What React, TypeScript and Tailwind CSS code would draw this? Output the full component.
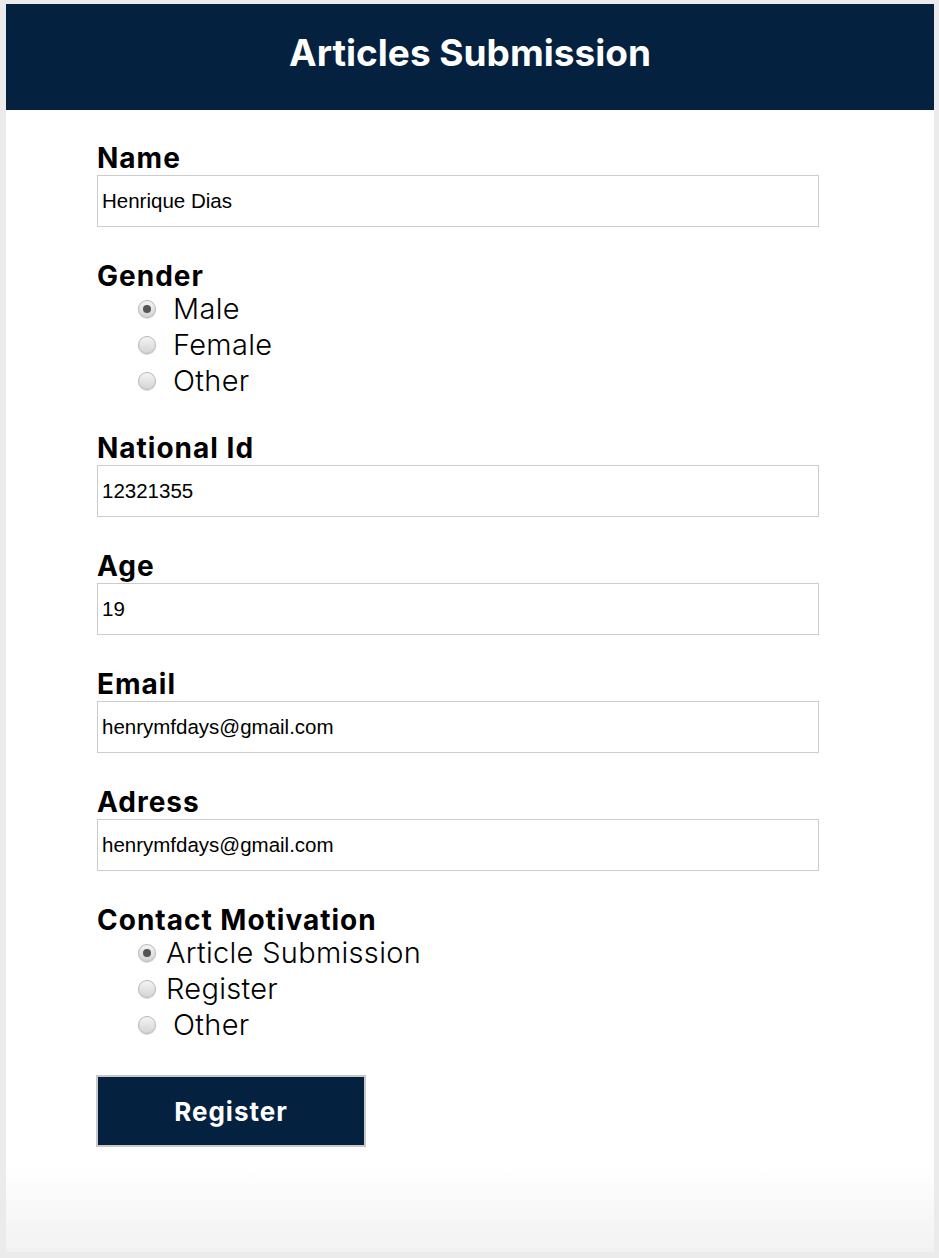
import { useState } from 'react'

const FONT = "font-['Inter','Noto_Sans',sans-serif]"

function Radio({ checked }: { checked: boolean }) {
  return (
    <span className="relative flex h-[18px] w-[18px] shrink-0 items-center justify-center rounded-full border border-[#b8b8b8] bg-[linear-gradient(to_bottom,#f4f4f4,#d4d4d4)] shadow-[0_1px_1px_rgba(0,0,0,0.15)]">
      {checked && <span className="h-[8px] w-[8px] rounded-full bg-[#555]" />}
    </span>
  )
}

function Field({ label, value }: { label: string; value: string }) {
  return (
    <div className="mb-[32px]">
      <div className="h-[34px] text-[28px] font-bold leading-[34px] tracking-[1px] text-black">{label}</div>
      <div className="flex h-[52px] w-[722px] items-center border border-[#cccccc] pl-[4px] font-['Liberation_Sans',Arial,sans-serif] text-[20.5px] text-black">
        {value}
      </div>
    </div>
  )
}

function RadioGroup({
  label,
  options,
  gap,
}: {
  label: string
  options: { text: string; extra?: boolean }[]
  gap: string
}) {
  const [sel] = useState(0)
  return (
    <div className="mb-[32px]">
      <div className="h-[34px] text-[28px] font-bold leading-[34px] tracking-[1px] text-black">{label}</div>
      <div className="-mt-[2px] pl-[41px]">
        {options.map((o, i) => (
          <div key={o.text} className={`flex h-[36px] items-center ${gap}`}>
            <Radio checked={i === sel} />
            <span
              className={`text-[29px] font-light leading-[36px] tracking-[0.3px] text-black ${o.extra ? 'pl-[7px]' : ''}`}
            >
              {o.text}
            </span>
          </div>
        ))}
      </div>
    </div>
  )
}

export default function App() {
  return (
    <div className={`min-h-[1258px] bg-[#ebebeb] pb-[6px] pl-[6px] pr-[5px] pt-[4px] ${FONT}`}>
      <div className="h-[1248px] bg-[linear-gradient(to_bottom,#ffffff_93%,#f2f2f2_100%)]">
        {/* Header */}
        <div className="flex h-[106px] items-center justify-center bg-[#04213f] pb-[8px]">
          <h1 className="text-[37px] font-bold text-white">Articles Submission</h1>
        </div>

        {/* Form */}
        <div className="px-[91px] pt-[31px]">
          <Field label="Name" value="Henrique Dias" />
          <RadioGroup
            label="Gender"
            gap="gap-[17px]"
            options={[{ text: 'Male' }, { text: 'Female' }, { text: 'Other' }]}
          />
          <Field label="National Id" value="12321355" />
          <Field label="Age" value="19" />
          <Field label="Email" value="henrymfdays@gmail.com" />
          <Field label="Adress" value="henrymfdays@gmail.com" />
          <RadioGroup
            label="Contact Motivation"
            gap="gap-[10px]"
            options={[{ text: 'Article Submission' }, { text: 'Register' }, { text: 'Other', extra: true }]}
          />
          <button
            type="button"
            className="ml-[-1px] mt-[4px] flex h-[72px] w-[270px] items-center justify-center border-2 border-[#c8c8c8] bg-[#04213f] text-[26px] font-bold tracking-[1px] text-white"
          >
            Register
          </button>
        </div>
      </div>
    </div>
  )
}
